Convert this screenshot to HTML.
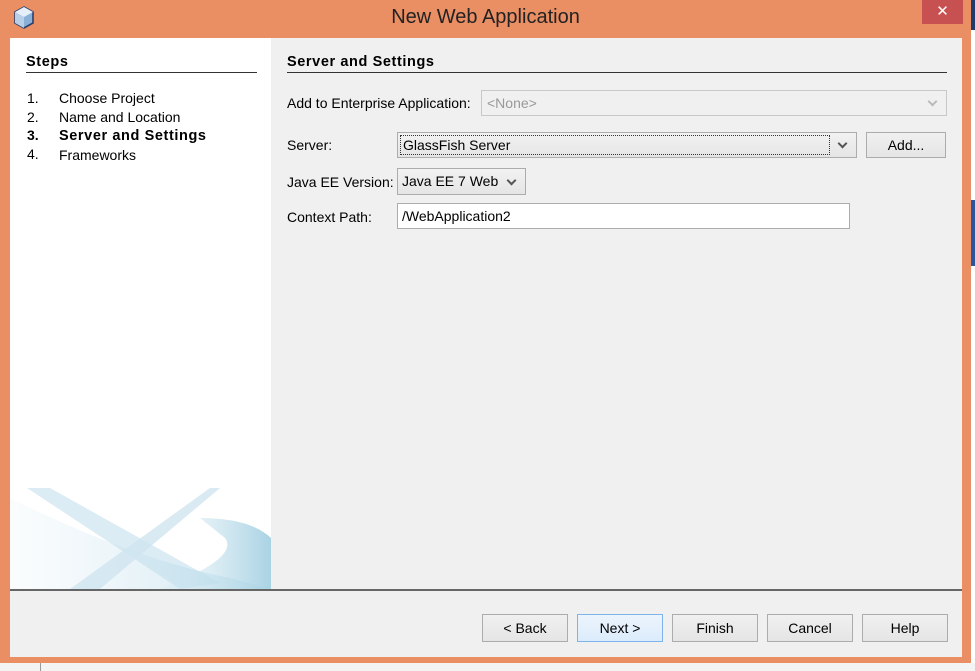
<!DOCTYPE html>
<html><head><style>
*{box-sizing:border-box;margin:0;padding:0}
body{width:975px;height:671px;overflow:hidden;background:#f4f4f4;font-family:"Liberation Sans",sans-serif;font-size:14px;color:#000;position:relative}
.a{position:absolute}
.combo{position:absolute;border:1px solid #acacac;background:linear-gradient(#f2f2f2,#e5e5e5);}
.btn{position:absolute;top:614px;width:86px;height:28px;border:1px solid #acacac;background:linear-gradient(#f0f0f0,#e5e5e5);text-align:center;line-height:26px;font-size:14px}
.lbl{position:absolute;left:287px;font-size:14px}
.chev{position:absolute;width:7px;height:7px;border-right:2px solid #555;border-bottom:2px solid #555;transform:rotate(45deg)}
.bd{font-weight:bold;font-size:14.5px;letter-spacing:0.6px}
</style></head><body>
<div class="a" style="left:971px;top:0;width:4px;height:671px;background:#fff"></div>
<div class="a" style="left:971px;top:0;width:4px;height:30px;background:#1f3a6b"></div>
<div class="a" style="left:971px;top:200px;width:4px;height:66px;background:#2b579a"></div>
<div class="a" style="left:0;top:663px;width:975px;height:8px;background:#f4f4f4"></div>
<div class="a" style="left:40px;top:663px;width:1px;height:8px;background:#999"></div>
<div class="a" style="left:0;top:0;width:971px;height:663px;background:#ea8e64"></div>
<svg class="a" style="left:13px;top:6px" width="22" height="24" viewBox="0 0 22 24"><path d="M11 1 L20 6 L20 17 L11 22 L2 17 L2 6 Z" fill="#8ab0d8" stroke="#2a3f6a" stroke-width="1.6"/><path d="M11 1 L20 6 L11 11 L2 6 Z" fill="#e6eef8"/><path d="M11 11 L11 22 L2 17 L2 6 Z" fill="#b8cfe8"/></svg>
<div class="a" style="left:0;top:6px;width:971px;text-align:center;font-size:20px;color:#222">New Web Application</div>
<div class="a" style="left:922px;top:0;width:41px;height:24px;background:#c75050;color:#fff;text-align:center;font-size:15px;line-height:24px">✕</div>
<div class="a" style="left:10px;top:38px;width:952px;height:619px;background:#f0f0f0"></div>
<div class="a" style="left:10px;top:38px;width:261px;height:551px;background:#fff;overflow:hidden">
<svg width="261" height="551" style="position:absolute;left:0;top:0">
<defs><linearGradient id="g" x1="0" x2="1"><stop offset="0" stop-color="#d7eaf3" stop-opacity="0.2"/><stop offset="1" stop-color="#a9d3e4"/></linearGradient></defs>
<path d="M17 450 L40 450 L210 545 L170 551 Z" fill="#cde4ef" opacity="0.7"/>
<path d="M0 460 Q120 520 220 540 L261 551 L0 551 Z" fill="url(#g)" opacity="0.6"/>
<path d="M60 551 L200 450 L210 450 L90 551 Z" fill="#cfe5f0" opacity="0.8"/>
<path d="M190 480 Q240 480 261 500 L261 551 L150 551 Q230 520 215 500 Z" fill="url(#g)"/>
</svg>
</div>
<div class="a bd" style="left:26px;top:54px">Steps</div>
<div class="a" style="left:26px;top:72px;width:231px;height:1px;background:#333"></div>
<div class="a" style="left:27px;top:89px;line-height:18.5px">1.<br>2.<br><b>3.</b><br>4.</div>
<div class="a" style="left:59px;top:89px;line-height:18.5px">Choose Project<br>Name and Location<br><span class="bd">Server and Settings</span><br>Frameworks</div>
<div class="a bd" style="left:287px;top:54px">Server and Settings</div>
<div class="a" style="left:287px;top:72px;width:660px;height:1px;background:#333"></div>
<div class="lbl" style="top:95px">Add to Enterprise Application:</div>
<div class="a" style="left:481px;top:90px;width:466px;height:26px;border:1px solid #c8c8c8;background:#f0f0f0;color:#999;padding:4px 5px">&lt;None&gt;</div>
<div class="chev" style="left:929px;top:98px;border-color:#bbb"></div>
<div class="lbl" style="top:137px">Server:</div>
<div class="combo" style="left:397px;top:132px;width:460px;height:26px"></div>
<div class="a" style="left:400px;top:135px;width:430px;height:20px;border:1px dotted #333;padding:1px 2px">GlassFish Server</div>
<div class="chev" style="left:839px;top:140px"></div>
<div class="a" style="left:866px;top:132px;width:80px;height:26px;border:1px solid #acacac;background:linear-gradient(#f0f0f0,#e5e5e5);text-align:center;line-height:24px;font-size:14px">Add...</div>
<div class="lbl" style="top:174px">Java EE Version:</div>
<div class="combo" style="left:397px;top:168px;width:129px;height:27px;padding:4px 4px">Java EE 7 Web</div>
<div class="chev" style="left:508px;top:177px"></div>
<div class="lbl" style="top:209px">Context Path:</div>
<div class="a" style="left:397px;top:203px;width:453px;height:26px;border:1px solid #acacac;background:#fff;padding:4px 4px">/WebApplication2</div>
<div class="a" style="left:10px;top:589px;width:952px;height:2px;background:#666"></div>
<div class="btn" style="left:482px">&lt; Back</div>
<div class="btn" style="left:577px;border-color:#7eb4ea;background:linear-gradient(#ecf4fc,#dcecfc)">Next &gt;</div>
<div class="btn" style="left:672px">Finish</div>
<div class="btn" style="left:767px">Cancel</div>
<div class="btn" style="left:862px">Help</div>
</body></html>
